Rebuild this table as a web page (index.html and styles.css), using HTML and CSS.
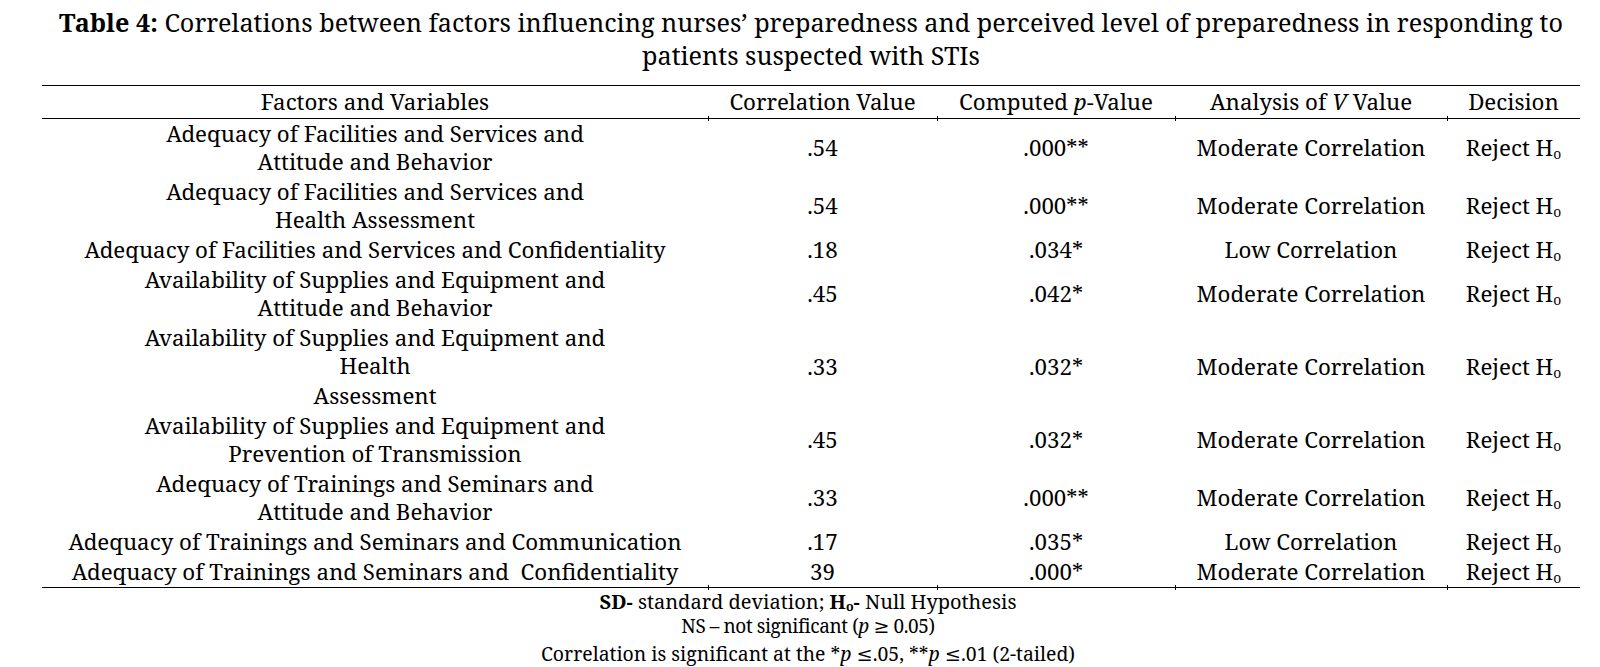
FILE: index.html
```html
<!DOCTYPE html>
<html lang="en">
<head>
<meta charset="utf-8">
<title>Table 4</title>
<link rel="stylesheet" href="styles.css">
</head>
<body>
<div class="page">
  <p class="caption"><b>Table 4:</b> Correlations between factors influencing nurses’ preparedness and perceived level of preparedness in responding to<br>patients suspected with STIs</p>
  <table class="tbl">
    <colgroup>
      <col class="c1"><col class="c2"><col class="c3"><col class="c4"><col class="c5">
    </colgroup>
    <thead>
      <tr>
        <th>Factors and Variables</th>
        <th class="tick">Correlation Value</th>
        <th class="tick">Computed <i>p</i>-Value</th>
        <th class="tick">Analysis of <i>V</i> Value</th>
        <th class="tick">Decision</th>
      </tr>
    </thead>
    <tbody>
      <tr><td>Adequacy of Facilities and Services and<br>Attitude and Behavior</td><td>.54</td><td>.000**</td><td>Moderate Correlation</td><td>Reject H<sub class="sub">o</sub></td></tr>
      <tr><td>Adequacy of Facilities and Services and<br>Health Assessment</td><td>.54</td><td>.000**</td><td>Moderate Correlation</td><td>Reject H<sub class="sub">o</sub></td></tr>
      <tr><td>Adequacy of Facilities and Services and Confidentiality</td><td>.18</td><td>.034*</td><td>Low Correlation</td><td>Reject H<sub class="sub">o</sub></td></tr>
      <tr><td>Availability of Supplies and Equipment and<br>Attitude and Behavior</td><td>.45</td><td>.042*</td><td>Moderate Correlation</td><td>Reject H<sub class="sub">o</sub></td></tr>
      <tr><td>Availability of Supplies and Equipment and<br>Health<br><span class="para">Assessment</span></td><td>.33</td><td>.032*</td><td>Moderate Correlation</td><td>Reject H<sub class="sub">o</sub></td></tr>
      <tr><td>Availability of Supplies and Equipment and<br>Prevention of Transmission</td><td>.45</td><td>.032*</td><td>Moderate Correlation</td><td>Reject H<sub class="sub">o</sub></td></tr>
      <tr><td>Adequacy of Trainings and Seminars and<br>Attitude and Behavior</td><td>.33</td><td>.000**</td><td>Moderate Correlation</td><td>Reject H<sub class="sub">o</sub></td></tr>
      <tr><td>Adequacy of Trainings and Seminars and Communication</td><td>.17</td><td>.035*</td><td>Low Correlation</td><td>Reject H<sub class="sub">o</sub></td></tr>
      <tr class="last"><td>Adequacy of Trainings and Seminars and&nbsp; Confidentiality</td><td class="tick">39</td><td class="tick">.000*</td><td class="tick">Moderate Correlation</td><td class="tick">Reject H<sub class="sub">o</sub></td></tr>
    </tbody>
  </table>
  <div class="notes">
    <p class="n1"><b>SD-</b> standard deviation; <b>H<sub class="sub">o</sub>-</b> Null Hypothesis</p>
    <p class="n2">NS – not significant (<i>p</i> ≥ 0.05)</p>
    <p class="n3">Correlation is significant at the *<i>p</i> ≤.05, **<i>p</i> ≤.01 (2-tailed)</p>
  </div>
</div>
</body>
</html>
```
FILE: styles.css
```css
html, body {
  margin: 0;
  padding: 0;
  background: #ffffff;
  color: #000000;
}

body {
  font-family: "Noto Serif", "DejaVu Serif", serif;
}

.page {
  width: 1538px;
  margin-left: 42px;
  padding-top: 6px;
}

.caption {
  margin: 0 0 13px 0;
  font-size: 25.2px;
  line-height: 33px;
  text-align: center;
}

.caption b {
  font-weight: 700;
}

.tbl {
  width: 1538px;
  border-collapse: collapse;
  table-layout: fixed;
  font-size: 22.3px;
  line-height: 28px;
}

.c1 { width: 666px; }
.c2 { width: 229px; }
.c3 { width: 238px; }
.c4 { width: 272px; }
.c5 { width: 133px; }

.tbl th {
  font-weight: 400;
  text-align: center;
  padding: 2px 0 2px 0;
  border-top: 1.5px solid #000;
  border-bottom: 1.5px solid #000;
  white-space: nowrap;
}

.tbl td {
  text-align: center;
  vertical-align: middle;
  padding: 1px 0;
  white-space: nowrap;
}

.tbl tr.last td {
  border-bottom: 1.5px solid #000;
}

.tbl .tick {
  position: relative;
}

.tbl .tick::after {
  content: "";
  position: absolute;
  left: 0;
  bottom: -3px;
  width: 1px;
  height: 5px;
  background: #000;
}

.para {
  display: inline-block;
  margin-top: 2px;
}

.sub {
  font-size: 0.62em;
  line-height: 0;
  vertical-align: -0.2em;
}

.notes {
  text-align: center;
  line-height: 25px;
  padding-right: 6px;
  padding-top: 1px;
}

.notes p {
  margin: 0;
}

.notes .n1 {
  font-size: 20px;
}

.notes .n2 {
  font-size: 19px;
  letter-spacing: -0.4px;
}

.notes .n3 {
  font-size: 19.4px;
  line-height: 30px;
}
```
